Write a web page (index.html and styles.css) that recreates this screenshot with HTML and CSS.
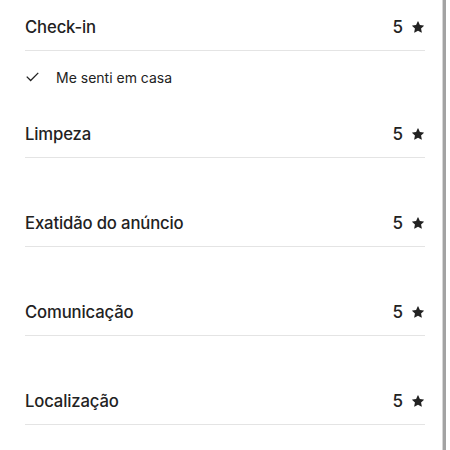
FILE: index.html
```html
<!DOCTYPE html>
<html lang="pt">
<head>
<meta charset="utf-8">
<link rel="stylesheet" href="styles.css">
</head>
<body>
<div class="page">
  <div class="content">
    <section class="section has-highlights">
      <div class="row"><span class="label">Check-in</span><span class="score">5 <svg class="star" viewBox="0 0 32 32"><path d="M15.1 1.58l-4.13 8.88-9.86 1.27a1 1 0 0 0-.54 1.74l7.3 6.57-1.97 9.85a1 1 0 0 0 1.48 1.06l8.62-5 8.63 5a1 1 0 0 0 1.48-1.06l-1.97-9.85 7.3-6.57a1 1 0 0 0-.55-1.73l-9.86-1.28-4.12-8.88a1 1 0 0 0-1.82 0z"/></svg></span></div>
      <ul class="highlights">
        <li class="highlight"><svg class="check" viewBox="0 0 14 10"><path d="M0.8 4.6l4.2 4.2 8.2-8.2" fill="none" stroke="currentColor" stroke-width="1.4"/></svg><span>Me senti em casa</span></li>
      </ul>
    </section>
    <section class="section">
      <div class="row"><span class="label">Limpeza</span><span class="score">5 <svg class="star" viewBox="0 0 32 32"><path d="M15.1 1.58l-4.13 8.88-9.86 1.27a1 1 0 0 0-.54 1.74l7.3 6.57-1.97 9.85a1 1 0 0 0 1.48 1.06l8.62-5 8.63 5a1 1 0 0 0 1.48-1.06l-1.97-9.85 7.3-6.57a1 1 0 0 0-.55-1.73l-9.86-1.28-4.12-8.88a1 1 0 0 0-1.820 0z"/></svg></span></div>
    </section>
    <section class="section">
      <div class="row"><span class="label">Exatidão do anúncio</span><span class="score">5 <svg class="star" viewBox="0 0 32 32"><path d="M15.1 1.58l-4.13 8.88-9.86 1.27a1 1 0 0 0-.54 1.74l7.3 6.57-1.97 9.85a1 1 0 0 0 1.48 1.06l8.62-5 8.63 5a1 1 0 0 0 1.48-1.06l-1.97-9.85 7.3-6.57a1 1 0 0 0-.55-1.73l-9.86-1.28-4.12-8.88a1 1 0 0 0-1.82 0z"/></svg></span></div>
    </section>
    <section class="section">
      <div class="row"><span class="label">Comunicação</span><span class="score">5 <svg class="star" viewBox="0 0 32 32"><path d="M15.1 1.58l-4.13 8.88-9.86 1.27a1 1 0 0 0-.54 1.74l7.3 6.57-1.97 9.85a1 1 0 0 0 1.48 1.06l8.62-5 8.63 5a1 1 0 0 0 1.48-1.06l-1.97-9.85 7.3-6.57a1 1 0 0 0-.55-1.73l-9.86-1.28-4.12-8.88a1 1 0 0 0-1.82 0z"/></svg></span></div>
    </section>
    <section class="section">
      <div class="row"><span class="label">Localização</span><span class="score">5 <svg class="star" viewBox="0 0 32 32"><path d="M15.1 1.58l-4.13 8.88-9.86 1.27a1 1 0 0 0-.54 1.74l7.3 6.57-1.97 9.85a1 1 0 0 0 1.48 1.06l8.62-5 8.63 5a1 1 0 0 0 1.48-1.06l-1.97-9.85 7.3-6.57a1 1 0 0 0-.55-1.73l-9.86-1.28-4.12-8.88a1 1 0 0 0-1.82 0z"/></svg></span></div>
    </section>
  </div>
  <div class="scrollbar"></div>
</div>
</body>
</html>
```

FILE: styles.css
```css
html, body {
  margin: 0;
  padding: 0;
  background: #fff;
}
body {
  font-family: Inter, "Noto Sans", sans-serif;
  color: #222;
  overflow: hidden;
  height: 450px;
}
.page {
  display: flex;
  height: 450px;
}
.content {
  width: 400px;
  padding: 4px 0 0 25px;
}
.scrollbar {
  width: 3px;
  height: 450px;
  margin-left: 17px;
  background: #a3a3a3;
  border-left: 1px solid #d6d6d6;
}
.section {
  margin-bottom: 42px;
}
.section.has-highlights {
  margin-bottom: 25px;
}
.row {
  display: flex;
  justify-content: space-between;
  align-items: center;
  height: 46px;
  border-bottom: 1px solid #e4e4e4;
}
.label {
  font-size: 16.7px;
  font-weight: 500;
  letter-spacing: -0.15px;
}
.score {
  display: flex;
  align-items: center;
  gap: 9px;
  font-size: 17px;
  font-weight: 500;
  padding-right: 1px;
}
.star {
  width: 12px;
  height: 12px;
  fill: #222;
}
.highlights {
  list-style: none;
  margin: 17px 0 0;
  padding: 0;
}
.highlight {
  display: flex;
  align-items: center;
  gap: 17px;
  height: 18px;
  font-size: 14px;
  font-weight: 400;
}
.check {
  width: 13px;
  height: 10px;
  color: #222;
  margin-left: 1px;
}
```
